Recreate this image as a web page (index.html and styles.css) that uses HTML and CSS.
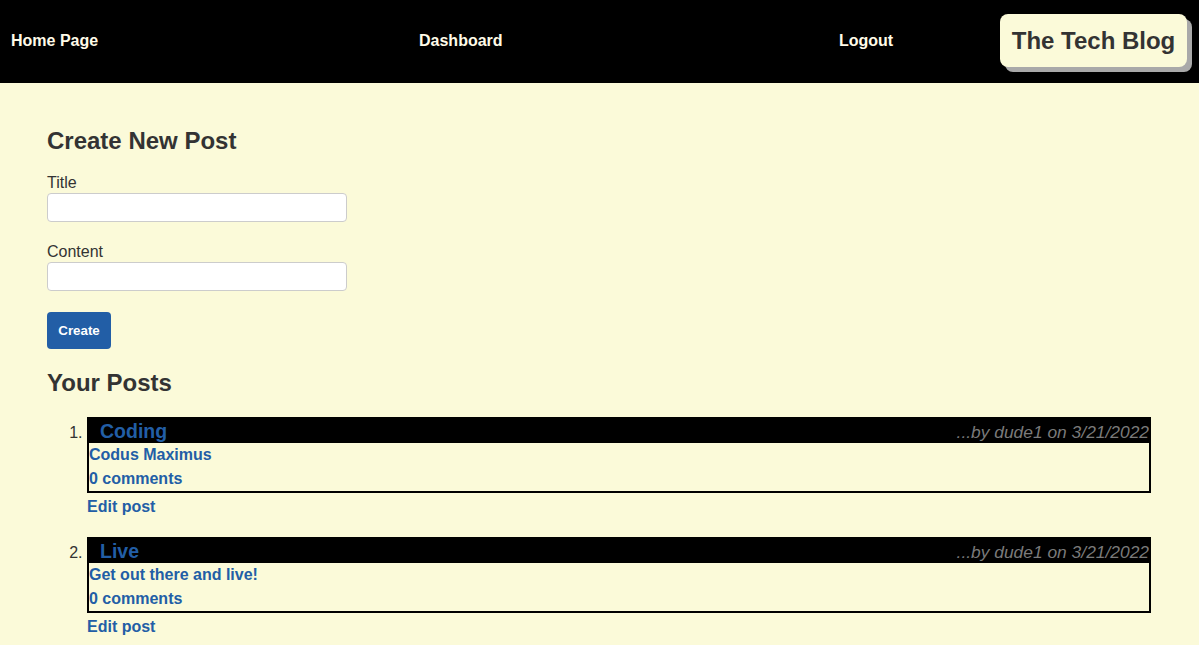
FILE: index.html
```html
<!DOCTYPE html>
<html>
<head>
<meta charset="utf-8">
<link rel="stylesheet" href="styles.css">
<title>The Tech Blog</title>
</head>
<body>
<header class="topbar">
  <a class="nav-link" href="#">Home Page</a>
  <a class="nav-link" href="#">Dashboard</a>
  <a class="nav-link" href="#">Logout</a>
  <div class="logo">The Tech Blog</div>
</header>
<main class="main">
  <h2 class="section-title">Create New Post</h2>
  <form class="post-form">
    <label class="field-label" for="title">Title</label>
    <input class="field-input" id="title" type="text">
    <label class="field-label field-label-second" for="content">Content</label>
    <input class="field-input" id="content" type="text">
    <button class="create-btn" type="button">Create</button>
  </form>
  <h2 class="section-title posts-title">Your Posts</h2>
  <ol class="post-list">
    <li class="post-item">
      <div class="post-card">
        <div class="post-head">
          <span class="post-title">Coding</span>
          <span class="post-meta">...by dude1 on 3/21/2022</span>
        </div>
        <div class="post-body">
          <div class="post-line">Codus Maximus</div>
          <div class="post-line">0 comments</div>
        </div>
      </div>
      <a class="edit-link" href="#">Edit post</a>
    </li>
    <li class="post-item">
      <div class="post-card">
        <div class="post-head">
          <span class="post-title">Live</span>
          <span class="post-meta">...by dude1 on 3/21/2022</span>
        </div>
        <div class="post-body">
          <div class="post-line">Get out there and live!</div>
          <div class="post-line">0 comments</div>
        </div>
      </div>
      <a class="edit-link" href="#">Edit post</a>
    </li>
  </ol>
</main>
</body>
</html>
```

FILE: styles.css
```css
* { box-sizing: border-box; }
html, body {
  margin: 0;
  padding: 0;
  background: #fbfad9;
  font-family: "Liberation Sans", Arial, sans-serif;
  color: #333333;
}
.topbar {
  background: #000;
  height: 83px;
  display: grid;
  grid-template-columns: 408px 420px 161px auto;
  align-items: center;
  padding-left: 11px;
}
.nav-link {
  color: #fffbe8;
  font-weight: bold;
  font-size: 16px;
  line-height: 18px;
  margin-top: -1px;
  text-decoration: none;
}
.logo {
  justify-self: start;
  width: 187px;
  height: 53px;
  margin-top: -3px;
  background: #fbfad9;
  border-radius: 8px;
  box-shadow: 5px 5px 0 #a9a9a9;
  color: #333;
  font-weight: bold;
  font-size: 24px;
  display: flex;
  align-items: center;
  justify-content: center;
  padding-top: 1px;
}
.main {
  padding: 0 48px 0 47px;
}
.section-title {
  font-size: 24px;
  line-height: 28px;
  margin: 44px 0 0 0;
  font-weight: bold;
}
.post-form {
  display: flex;
  flex-direction: column;
  align-items: flex-start;
  margin-top: 19px;
}
.field-label {
  font-size: 16px;
  line-height: 18px;
}
.field-label-second { margin-top: 21px; }
.field-input {
  width: 300px;
  height: 29px;
  margin-top: 1px;
  border: 1px solid #cccccc;
  border-radius: 4px;
  background: #fff;
}
.create-btn {
  margin-top: 21px;
  width: 64px;
  height: 37px;
  background: #225ea6;
  color: #fff;
  border: none;
  border-radius: 4px;
  font-family: "Liberation Sans", Arial, sans-serif;
  font-weight: bold;
  font-size: 13.33px;
}
.posts-title {
  margin-top: 20px;
}
.post-list {
  margin: 20px 0 0 0;
  padding-left: 40px;
  font-size: 16px;
}
.post-item {
  margin-bottom: 18px;
}
.post-item::marker {
  color: #333;
}
.post-card {
  border: 2px solid #000;
}
.post-head {
  background: #000;
  height: 24px;
  display: flex;
  justify-content: space-between;
  align-items: center;
  padding-left: 11px;
}
.post-title {
  color: #225ea6;
  font-weight: bold;
  font-size: 19.5px;
  line-height: 24px;
}
.post-meta {
  color: #7a7a7a;
  font-style: italic;
  font-size: 17.4px;
  margin-top: 2px;
}
.post-line {
  color: #225ea6;
  font-weight: bold;
  line-height: 24px;
}
.edit-link {
  display: block;
  color: #225ea6;
  font-weight: bold;
  text-decoration: none;
  line-height: 24px;
  margin-top: 2px;
}
```
